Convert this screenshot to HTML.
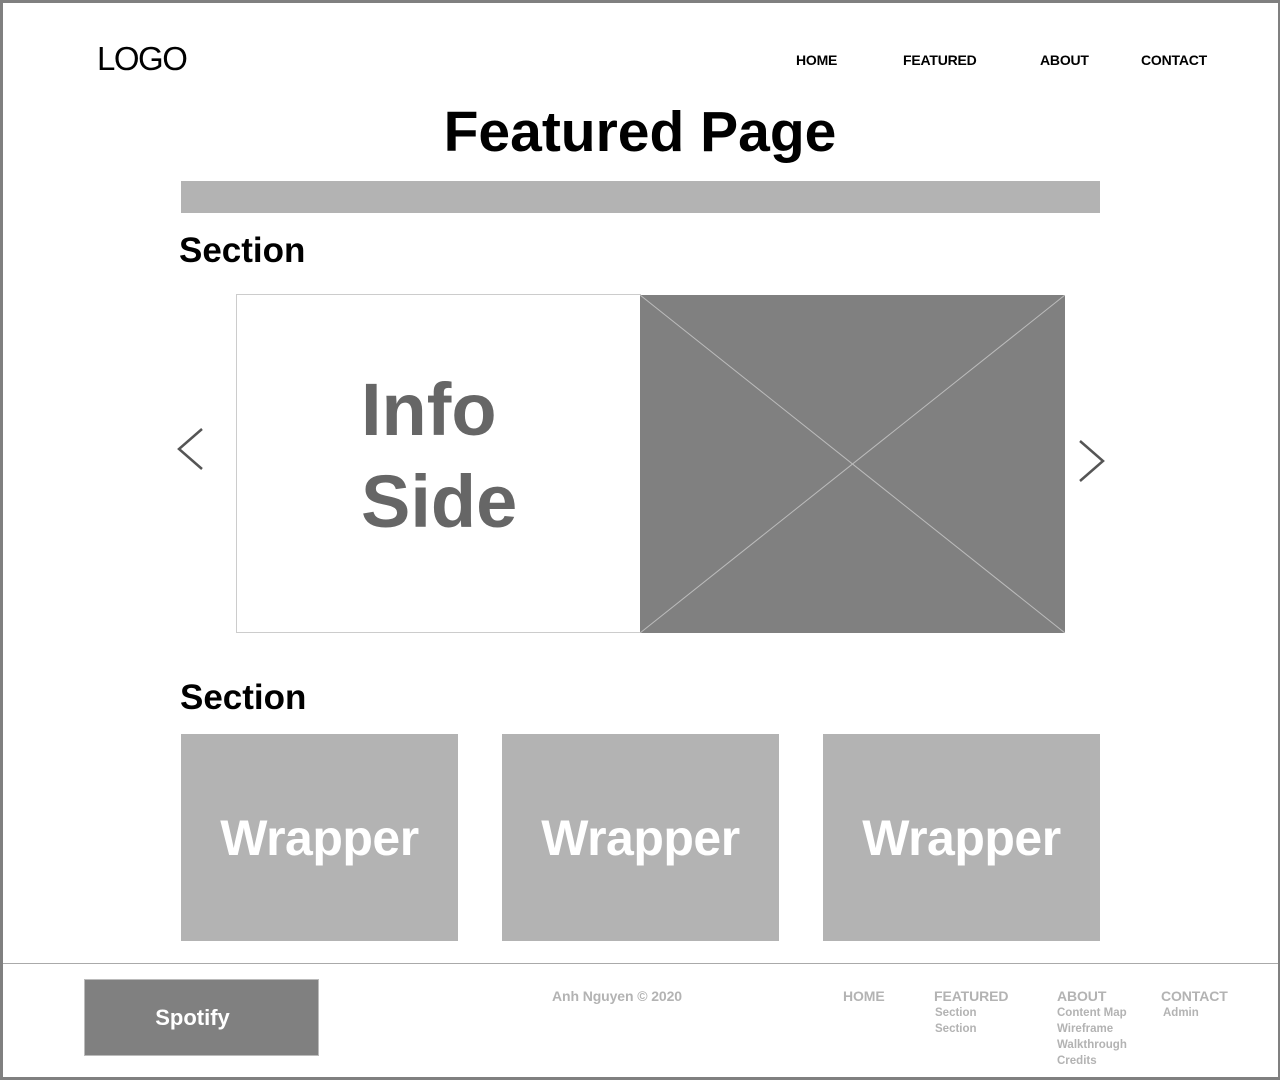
<!DOCTYPE html>
<html><head><style>
*{margin:0;padding:0;box-sizing:border-box}
body{width:1280px;height:1080px;position:relative;font-family:"Liberation Sans",sans-serif;background:#fff;overflow:hidden}
.frame{position:absolute;left:0;top:0;width:1280px;height:1080px;border:3px solid #808080;border-right-width:2px}
.a{position:absolute;white-space:nowrap}
.nav{font-size:14px;font-weight:bold;top:52px;letter-spacing:-0.2px}
.wr{position:absolute;top:734px;width:277px;height:207px;background:#b3b3b3;color:#fff;font-weight:bold;font-size:50px;display:flex;align-items:center;justify-content:center;letter-spacing:-0.5px}
.f{color:#b3b3b3;font-weight:bold;font-size:14px;letter-spacing:-0.1px}
.fs{color:#b3b3b3;font-weight:bold;font-size:11.5px;line-height:16px;letter-spacing:0px}
</style></head><body>
<div class="frame"></div>
<div class="a" style="left:97px;top:40px;font-size:33px;letter-spacing:-1.5px">LOGO</div>
<div class="a nav" style="left:796px">HOME</div>
<div class="a nav" style="left:903px">FEATURED</div>
<div class="a nav" style="left:1040px">ABOUT</div>
<div class="a nav" style="left:1141px">CONTACT</div>
<div class="a" style="left:0;width:1280px;text-align:center;top:99px;font-size:57px;font-weight:bold;letter-spacing:0px">Featured Page</div>
<div class="a" style="left:181px;top:181px;width:919px;height:32px;background:#b3b3b3"></div>
<div class="a" style="left:179px;top:231px;font-size:35px;font-weight:bold">Section</div>
<div class="a" style="left:236px;top:294px;width:405px;height:339px;border:1.5px solid #ccc"></div>
<div class="a" style="left:361px;top:364px;font-size:74px;font-weight:bold;color:#666;line-height:92px;letter-spacing:0px">Info<br>Side</div>
<svg class="a" style="left:640px;top:295px" width="425" height="338"><rect width="425" height="338" fill="#808080"/><line x1="0" y1="0" x2="425" y2="338" stroke="#bbb" stroke-width="1"/><line x1="425" y1="0" x2="0" y2="338" stroke="#bbb" stroke-width="1"/></svg>
<svg class="a" style="left:175px;top:426px" width="30" height="46"><path d="M27 3 L4 23 L27 43" fill="none" stroke="#555" stroke-width="2.5"/></svg>
<svg class="a" style="left:1076px;top:438px" width="30" height="46"><path d="M4 3 L27 23 L4 43" fill="none" stroke="#555" stroke-width="2.5"/></svg>
<div class="a" style="left:180px;top:678px;font-size:35px;font-weight:bold">Section</div>
<div class="wr" style="left:181px">Wrapper</div>
<div class="wr" style="left:502px">Wrapper</div>
<div class="wr" style="left:823px">Wrapper</div>
<div class="a" style="left:3px;top:963px;width:1275px;height:1px;background:#aaa"></div>
<div class="a" style="left:84px;top:979px;width:235px;height:77px;background:#808080;border:1.5px solid #bbb;color:#fff;font-weight:bold;font-size:22px;display:flex;align-items:center;justify-content:center;padding-right:18px">Spotify</div>
<div class="a f" style="left:552px;top:988px">Anh Nguyen © 2020</div>
<div class="a f" style="left:843px;top:988px">HOME</div>
<div class="a f" style="left:934px;top:988px">FEATURED</div>
<div class="a fs" style="left:935px;top:1005px">Section<br>Section</div>
<div class="a f" style="left:1057px;top:988px">ABOUT</div>
<div class="a fs" style="left:1057px;top:1005px">Content Map<br>Wireframe<br>Walkthrough<br>Credits</div>
<div class="a f" style="left:1161px;top:988px">CONTACT</div>
<div class="a fs" style="left:1163px;top:1005px">Admin</div>
</body></html>
